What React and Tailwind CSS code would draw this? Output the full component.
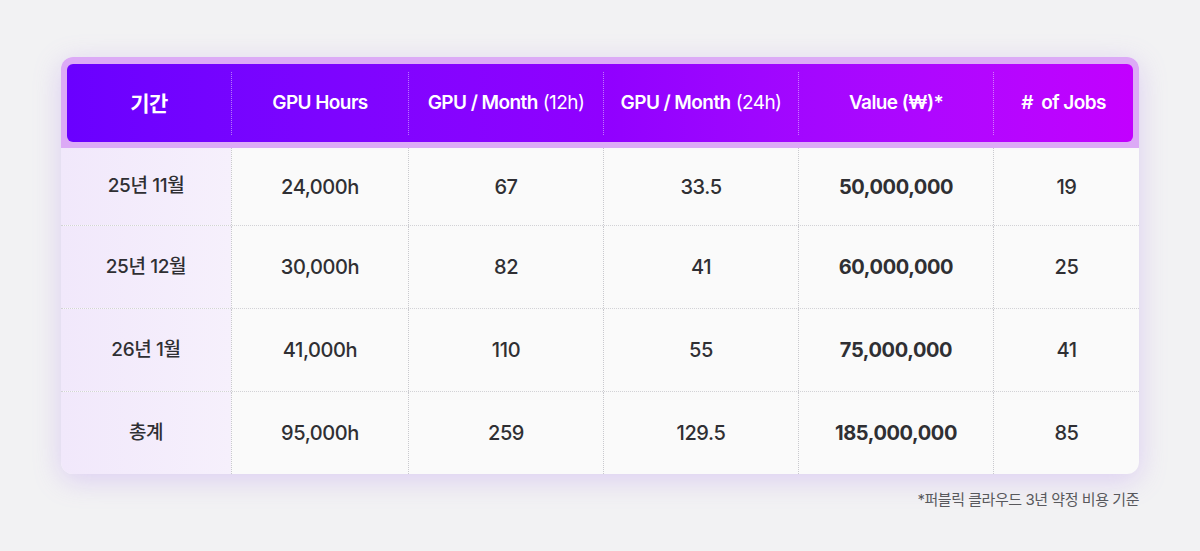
import React from "react";

const headers = [
  { t: "기간" },
  { t: "GPU Hours" },
  { t: "GPU / Month", s: "(12h)" },
  { t: "GPU / Month", s: "(24h)" },
  { t: "Value (₩)*" },
  { t: "#\u00a0 of Jobs" },
];
const rows = [
  ["25년 11월", "24,000h", "67", "33.5", "50,000,000", "19"],
  ["25년 12월", "30,000h", "82", "41", "60,000,000", "25"],
  ["26년 1월", "41,000h", "110", "55", "75,000,000", "41"],
  ["총계", "95,000h", "259", "129.5", "185,000,000", "85"],
];

export default function App() {
  return (
    <div
      className="w-[1200px] h-[551px] bg-[#f2f2f3] pt-[57px] px-[61px]"
      style={{ fontFamily: 'Inter, "Noto Sans CJK KR", sans-serif' }}
    >
      <div className="w-[1078px] rounded-[12px] overflow-hidden bg-[#fafafa] shadow-[0_6px_28px_rgba(160,110,240,0.28)]">
        <div className="bg-[#dcaaf6] pt-[7px] px-[6px] pb-[6px]">
          <div className="h-[78px] rounded-[6px] bg-gradient-to-r from-[#6a00ff] via-[#9000ff] to-[#c200ff] grid grid-cols-[164px_177px_195px_195px_195px_1fr] pt-[8px] pb-[7px]">
            {headers.map((h, i) => (
              <div
                key={i}
                className={`flex items-center justify-center text-white font-semibold tracking-[-0.03em] ${
                  i > 0 ? "text-[19px] border-l border-dotted border-white/45" : "text-[21px]"
                }`}
              >
                <span>{h.t}</span>
                {h.s && <span className="font-normal ml-[5px]">{h.s}</span>}
              </div>
            ))}
          </div>
        </div>
        {rows.map((r, ri) => (
          <div
            key={ri}
            className={`grid grid-cols-[170px_177px_195px_195px_195px_1fr] ${
              ri === 0 ? "h-[77px]" : "h-[83px] border-t border-dotted border-[#d2d2d6]"
            }`}
          >
            {r.map((c, ci) => (
              <div
                key={ci}
                className={`flex items-center justify-center text-[#2f2f33] tracking-[-0.02em] ${
                  ci === 4 ? "font-bold" : "font-medium"
                } ${
                  ci === 0
                    ? "text-[19px] bg-gradient-to-r from-[#f1e8fb] to-[#f6f0fc]"
                    : "text-[20px] border-l border-dotted border-[#c9c9ce]"
                }`}
              >
                {c}
              </div>
            ))}
          </div>
        ))}
      </div>
      <div className="w-[1078px] flex justify-end mt-[15px] text-[15px] text-[#58585c] tracking-[-0.03em]">
        *퍼블릭 클라우드 3년 약정 비용 기준
      </div>
    </div>
  );
}
